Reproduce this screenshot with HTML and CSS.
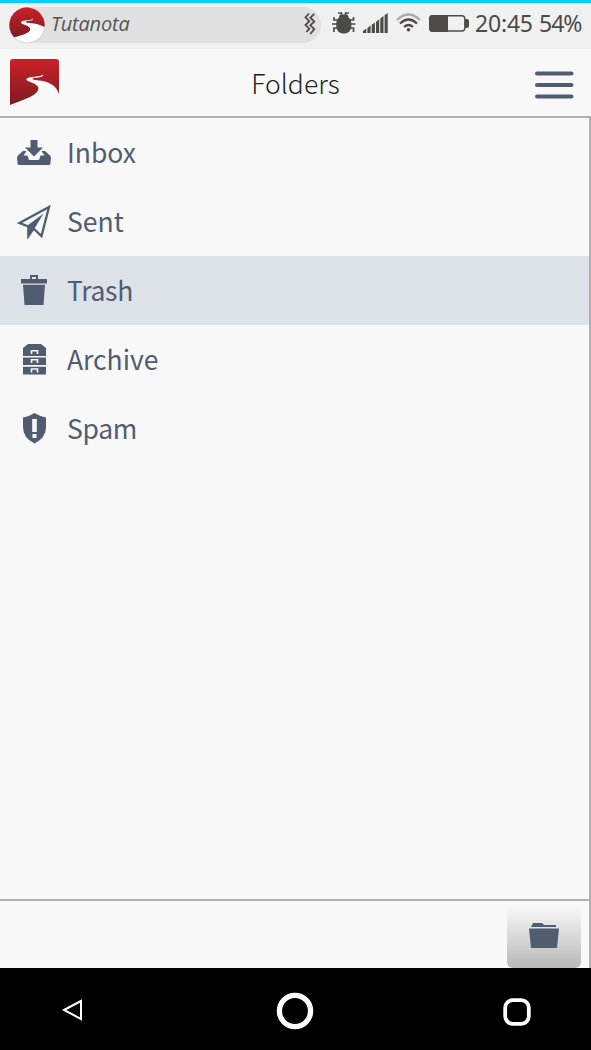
FILE: index.html
```html
<!DOCTYPE html>
<html lang="en">
<head>
<meta charset="utf-8">
<title>Tutanota - Folders</title>
<link rel="stylesheet" href="styles.css">
</head>
<body>
<div class="statusbar">
  <div class="ticker">
    <svg class="ticker-logo" viewBox="0 0 36 37">
      <defs><linearGradient id="red" x1="0" y1="0" x2="0" y2="1"><stop offset="0" stop-color="#cb2127"/><stop offset="1" stop-color="#7d1b22"/></linearGradient></defs>
      <circle cx="18" cy="18.6" r="17.8" fill="#c9c9c9"/>
      <circle cx="18" cy="18" r="17.7" fill="#fff"/>
      <path d="M5.200 30.300A17.700 17.700 0 1 1 35.600 20C33 18.500 29 17 24.500 16.500C20 16 16.500 15.800 17 14.800C18 13.400 24.500 14.800 24 11.500C22.500 13.300 20 13 16 13.500C11.500 14 11 15.500 13 16.700C16 18.300 21 19 21.300 22C21 26 14 28 5.200 30.300Z" fill="url(#red)"/>
    </svg>
    <span class="ticker-text">Tutanota</span>
    <svg class="vibrate" viewBox="0 0 12 24" fill="none" stroke="#4d4a4a" stroke-width="1.800"><path d="M5 1.500L1.500 5.500L5.300 9.200L1.500 13L5.300 16.700L2.500 20M10.300 2L6.300 5.700L10.300 9.500L6.300 13.300L10.300 17L6.300 22"/></svg>
  </div>
  <div class="indicators">
    <svg class="bug" viewBox="0 0 24 22"><g fill="none" stroke="#4d4a4a" stroke-width="1.700"><path d="M6 1H9.500V4M17 1H13.500V4M5.500 8H2V5M18 8H21.500V5M5 12H0M18 12H23.500M6 16H2V20M17 16H21.500V20"/></g><rect x="4.300" y="4" width="15" height="17.500" rx="6.800" fill="#4d4a4a"/><path d="M7 5Q7 2.500 9.500 2.500H14Q16.500 2.500 16.500 5Z" fill="#4d4a4a"/></svg>
    <svg class="signal" viewBox="0 0 25 20" fill="#4d4a4a"><path d="M0 20V18L3.300 15.500V20ZM4.400 20V15L7.600 12.500V20ZM8.700 20V11.800L11.900 9.400V20ZM13 20V8.700L16.200 6.300V20ZM17.300 20V5.500L20.500 3.100V20ZM21.600 20V2.300L24.700 0V20Z"/></svg>
    <svg class="wifi" viewBox="0 0 25 19" fill="none" stroke="#4d4a4a" stroke-width="2.200"><path d="M1 7Q12.500-4 24 7" stroke="#aaa"/><path d="M4 10.500Q12.500 2.500 21 10.500M8 14Q12.500 10 17 14"/><circle cx="12.500" cy="16.800" r="1.800" fill="#4d4a4a" stroke="none"/></svg>
    <svg class="battery" viewBox="0 0 40 17"><rect x=".800" y=".800" width="35" height="15.200" rx="3" fill="none" stroke="#4d4a4a" stroke-width="1.400"/><path d="M3 0H19V17H3Q0 17 0 13V4Q0 0 3 0ZM36 4H38Q40 4 40 6V11Q40 13 38 13H36Z" fill="#4d4a4a"/></svg>
    <span class="clock">20:45</span>
    <span class="percent">54%</span>
  </div>
</div>
<header class="header">
  <svg class="logo" viewBox="0 0 49 46"><path d="M0 46V3Q0 0 3 0H46Q49 0 49 3V35C47 28 41 24 34 22.300C28 21 21.500 21.300 22.500 19.600C24 18 34 19.500 33.300 15C32 17.300 28 17.300 22 18C16 18.600 15 20.600 18 22C22 24 28.500 25.500 28.500 29.500C28 36 16 40 0 46Z" fill="url(#red)"/></svg>
  <h1 class="title">Folders</h1>
  <svg class="menu" viewBox="0 0 39 28" fill="none" stroke="#505d70" stroke-width="4" stroke-linecap="round"><path d="M2 2.500H36.500M2 14H36.500M2 25.500H36.500"/></svg>
</header>
<main class="folders">
  <div class="row"><span class="icon"><svg class="inbox" viewBox="0 0 34 25" fill="#505d70"><path d="M13.500 0H20.500V7.500H26L17 16.500L8 7.500H13.500Z"/><path d="M6 11H9.500L6.500 15.500H10.500L12 20H22L23.500 15.500H27.500L24.500 11H28L33 15.500Q34 16.500 34 18L33.300 24Q33 25 32 25H2Q1 25 .700 24L0 18Q0 16.500 1 15.500Z"/></svg></span><span class="label">Inbox</span></div>
  <div class="row"><span class="icon"><svg class="sent" viewBox="0 0 34 34"><path d="M2.500 18L32 2L24.500 31L16.500 23.500L11.500 31V21.500Z" fill="none" stroke="#505d70" stroke-width="2.300"/><path d="M26.500 8.500L10.500 20.500V33L17.500 23.500Z" fill="#505d70"/></svg></span><span class="label">Sent</span></div>
  <div class="row selected"><span class="icon"><svg class="trash" viewBox="0 0 26 31" fill="#505d70"><path d="M0 4H9V0H17V4H26V8.500H0ZM11 2V4H15V2Z" fill-rule="evenodd"/><path d="M2 9.700H24L22.500 30H3.500Z"/></svg></span><span class="label tight">Trash</span></div>
  <div class="row"><span class="icon"><svg class="archive" viewBox="0 0 23 31"><path d="M0 4L5 0H18L23 4V12H0ZM0 13.600H23V21H0ZM0 22.700H23V30.500H0Z" fill="#505d70"/><path d="M8.500 10V6.700H14.500V10M8.500 19V15.800H14.500V19M8.500 28.500V25H14.500V28.500" stroke="#f8f8f8" stroke-width="1.600" fill="none"/></svg></span><span class="label">Archive</span></div>
  <div class="row"><span class="icon"><svg class="spam" viewBox="0 0 23 31"><path d="M11.500 0Q17 3.500 23 4.500V14Q23 25 11.500 30.500Q0 25 0 14V4.500Q6 3.500 11.500 0Z" fill="#505d70"/><path d="M9.200 6H13.800V19H9.200ZM9.500 21H13.500V25H9.500Z" fill="#f8f8f8"/></svg></span><span class="label tight">Spam</span></div>
</main>
<footer class="toolbar">
  <div class="folder-button"><svg class="folder" viewBox="0 0 30 25" fill="#505d70"><path d="M2 4L4 0H13L15 2H27V4Z"/><path d="M0 5.500H30L28 25H2Z"/></svg></div>
</footer>
<nav class="navbar">
  <svg class="back" viewBox="0 0 21 22"><path d="M2 11L19 2V20Z" fill="none" stroke="#fff" stroke-width="2"/></svg>
  <svg class="home" viewBox="0 0 38 38"><circle cx="19" cy="19" r="15.600" fill="none" stroke="#fff" stroke-width="5.300"/></svg>
  <svg class="recent" viewBox="0 0 28 28"><rect x="2.200" y="2.200" width="23.600" height="23.600" rx="7.500" fill="none" stroke="#fff" stroke-width="3.800"/></svg>
</nav>
</body>
</html>
```
FILE: styles.css
```css
* { box-sizing: border-box; }
body {
  margin: 0;
  width: 591px;
  height: 1050px;
  overflow: hidden;
  display: flex;
  flex-direction: column;
  background: #f8f8f8;
  color: #505d70;
  font-family: "Noto Sans CJK JP", sans-serif;
}
svg { display: block; flex: none; }
.statusbar {
  height: 49px;
  flex: none;
  border-top: 3px solid #00d0ff;
  background: #f0f0f0;
  padding: 4px 0 0 9px;
  display: flex;
  color: #4d4a4a;
  font-family: "Noto Sans", sans-serif;
}
.ticker {
  width: 312px;
  height: 36px;
  border-radius: 18px;
  background: #e0e0e0;
  display: flex;
  align-items: center;
}
.ticker-logo { width: 36px; height: 37px; }
.ticker-text { font: italic 20px/30px "Open Sans", sans-serif; color: #555; margin: -2px 0 0 6px; letter-spacing: -0.2px; }
.vibrate { width: 12px; height: 24px; margin: -3px 5px 0 auto; }
.indicators { display: flex; padding: 5px 0 0 11px; }
.bug { width: 24px; height: 22px; }
.signal { width: 25px; height: 20px; margin: 1px 0 0 7px; }
.wifi { width: 25px; height: 19px; margin: 1px 0 0 8px; }
.battery { width: 40px; height: 17px; margin: 3px 0 0 8px; }
.clock, .percent { font-size: 23px; line-height: 22px; white-space: nowrap; }
.clock { width: 64px; margin-left: 6px; letter-spacing: -0.2px; }
.percent { letter-spacing: -1px; }
.header {
  height: 69px;
  flex: none;
  border-bottom: 2px solid #b0b0b0;
  padding: 0 17px 2px 10px;
  display: grid;
  grid-template-columns: 49px 1fr 39px;
  align-items: center;
}
.logo { width: 49px; height: 46px; }
.title { margin: 2px 3px 0 0; text-align: center; font-size: 26.5px; font-weight: 300; color: #222; line-height: 40px; }
.menu { width: 39px; height: 28px; margin-top: 6px; }
.folders { height: 781px; flex: none; border-right: 2px solid #b0b0b0; }
.row { height: 69px; display: flex; align-items: center; }
.selected { background: #dde1e8; }
.icon { width: 67px; padding-left: 1px; display: flex; justify-content: center; }
.label { font-size: 26.5px; line-height: 40px; margin-top: -2px; }
.tight { letter-spacing: -0.3px; }
.inbox { width: 34px; height: 25px; }
.sent { width: 34px; height: 34px; }
.trash { width: 26px; height: 31px; margin-top: -1px; }
.archive, .spam { width: 23px; height: 31px; }
.toolbar {
  height: 69px;
  flex: none;
  border-top: 2px solid #b0b0b0;
  border-right: 2px solid #b0b0b0;
  padding: 5px 8px 0 0;
  display: flex;
  justify-content: flex-end;
}
.folder-button {
  width: 74px;
  height: 62px;
  border-radius: 6px;
  background: linear-gradient(#f8f8f8, #b8b8b8);
  display: flex;
  justify-content: center;
  padding-top: 17px;
}
.folder { width: 30px; height: 25px; }
.navbar {
  height: 82px;
  flex: none;
  background: #000;
  padding: 4px 60px 0 62px;
  display: grid;
  grid-template-columns: 21px 1fr 28px;
  align-items: center;
  justify-items: center;
}
.home { width: 38px; height: 38px; margin-left: 4px; }
.back { width: 21px; height: 22px; margin-top: -2px; }
.recent { width: 28px; height: 28px; margin-top: 2px; }
```
